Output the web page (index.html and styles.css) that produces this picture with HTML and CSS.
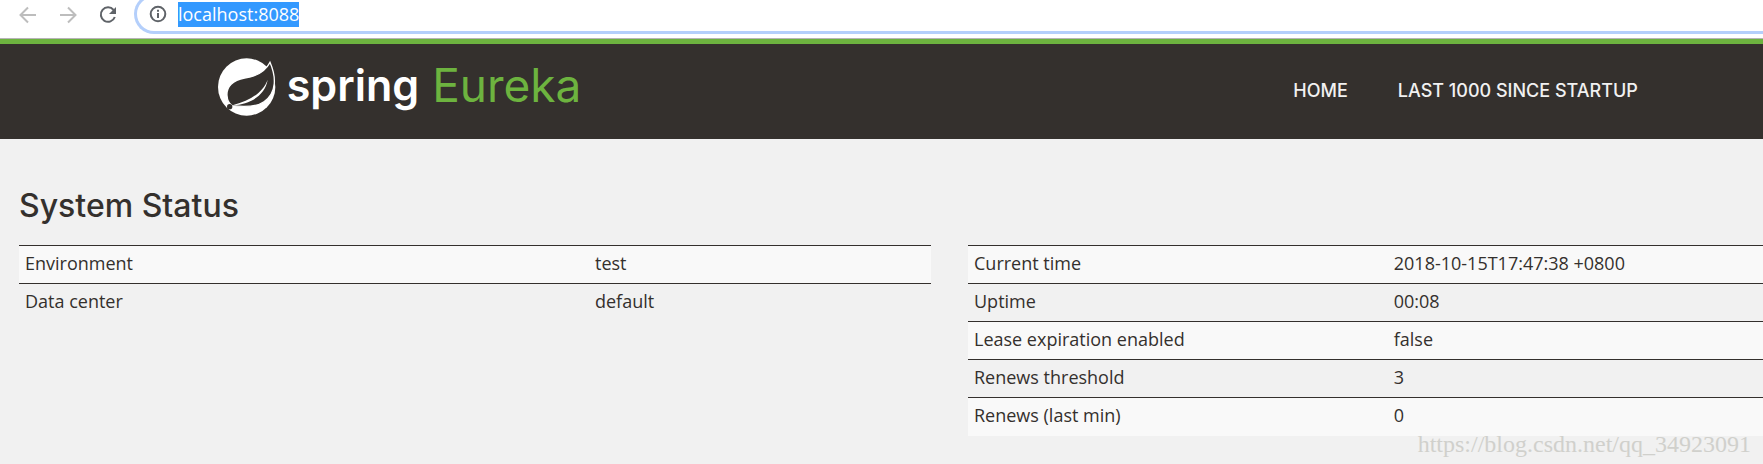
FILE: index.html
```
<!DOCTYPE html>
<html lang="en">
<head>
  <meta charset="UTF-8">
  <title>Eureka</title>
  <link rel="stylesheet" href="styles.css">
</head>
<body>

<div class="toolbar">
  <button class="tool-btn disabled" aria-label="Back">
    <svg width="18" height="18" viewBox="0 0 18 18"><path d="M17 9H2M9 1.5L1.5 9L9 16.5"/></svg>
  </button>
  <button class="tool-btn disabled" aria-label="Forward">
    <svg width="18" height="18" viewBox="0 0 18 18"><path d="M1 9h15M9 1.5L16.5 9L9 16.5"/></svg>
  </button>
  <button class="tool-btn" aria-label="Reload">
    <svg width="18" height="18" viewBox="0 0 18 18"><path d="M14.6 4A7.2 7.2 0 1 0 15.8 11"/><path class="solid" d="M17 1v7h-7z"/></svg>
  </button>
  <div class="omnibox">
    <svg class="info" width="18" height="18" viewBox="0 0 18 18"><circle cx="9" cy="9" r="7.3"/><path d="M9 8v5M9 4.8v2"/></svg>
    <input class="address" type="text" value="localhost:8088" aria-label="Address">
  </div>
</div>

<nav class="navbar">
  <a class="brand" href="#">
    <svg class="leaf" width="58" height="58" viewBox="52 55 174 174">
      <circle class="white" cx="138" cy="142" r="86"/>
      <path class="leaf-shape" d="M208 68C192 98 168 110 132 115C96 121 77 142 79 168C80 184 85 192 94 198C128 202 168 202 190 186C230 158 226 110 208 68Z"/>
      <path class="white" d="M201 120C186 160 146 184 98 196C142 196 193 170 201 120Z"/>
      <circle class="dot" cx="87" cy="201" r="8"/>
    </svg>
    <span class="brand-spring">spring</span>
    <span class="brand-name">Eureka</span>
  </a>
  <div class="nav-links">
    <a href="#">HOME</a>
    <a href="#">LAST 1000 SINCE STARTUP</a>
  </div>
</nav>

<main class="content">
  <h1>System Status</h1>
  <div class="status">
    <table class="table-env">
      <tr><td>Environment</td><td>test</td></tr>
      <tr><td>Data center</td><td>default</td></tr>
    </table>
    <table class="table-time">
      <tr><td>Current time</td><td>2018-10-15T17:47:38 +0800</td></tr>
      <tr><td>Uptime</td><td>00:08</td></tr>
      <tr><td>Lease expiration enabled</td><td>false</td></tr>
      <tr><td>Renews threshold</td><td>3</td></tr>
      <tr><td>Renews (last min)</td><td>0</td></tr>
    </table>
  </div>
</main>

<div class="watermark">https://blog.csdn.net/qq_34923091</div>

</body>
</html>
```
FILE: styles.css
```
* {
  box-sizing: border-box;
}

body {
  margin: 0;
  background: #f1f1f1;
  color: #34302d;
  font-family: "Open Sans", sans-serif;
  font-size: 18px;
}

/* Browser bar */
.toolbar {
  display: flex;
  align-items: flex-end;
  height: 39px;
  padding: 0 0 4px 19px;
  background: #fff;
  border-bottom: 1px solid #b6b4b6;
  overflow: hidden;
}

.tool-btn {
  display: flex;
  width: 18px;
  height: 18px;
  margin: 0 22px 10px 0;
  padding: 0;
  border: none;
  background: none;
}

.tool-btn svg, .info {
  fill: none;
  stroke: #5f6368;
  stroke-width: 2;
}

.tool-btn.disabled svg {
  stroke: #bdbdbd;
}

.tool-btn .solid {
  fill: #5f6368;
  stroke: none;
}

.omnibox {
  display: flex;
  flex: 1;
  align-items: center;
  gap: 11px;
  height: 40px;
  margin-left: -5px;
  padding-left: 12px;
  border: 3px solid #b4cffb;
  border-right: none;
  border-radius: 20px 0 0 20px;
}

.address {
  field-sizing: content;
  height: 25px;
  padding: 0;
  border: none;
  background: #3399ff;
  color: #fff;
  font-family: "Open Sans", sans-serif;
  font-size: 18px;
}

/* Header */
.navbar {
  display: flex;
  justify-content: space-between;
  height: 100px;
  padding: 0 7.1% 0 12.35%;
  background: #34302d;
  border-top: 5px solid #6db33f;
}

.brand {
  display: flex;
  align-items: center;
  height: 86px;
  text-decoration: none;
  font-family: Inter, sans-serif;
}

.leaf {
  margin-right: 11px;
}

.leaf .white {
  fill: #fff;
}

.leaf-shape {
  fill: #34302d;
  stroke: #fff;
  stroke-width: 4;
}

.leaf .dot {
  fill: #34302d;
}

.brand-spring {
  margin-right: 13px;
  padding-bottom: 4px;
  color: #fff;
  font-size: 43px;
  font-weight: 600;
}

.brand-name {
  padding-bottom: 4px;
  color: #6db33f;
  font-size: 46px;
}

.nav-links {
  display: flex;
  gap: 50px;
  align-items: center;
  padding-bottom: 2px;
}

.nav-links a {
  color: #f1f1f1;
  font-family: Inter, sans-serif;
  font-size: 18px;
  font-weight: 500;
  text-decoration: none;
}

/* Status tables */
.content {
  padding: 48px 0 0 19px;
}

h1 {
  margin: 0 0 20px;
  font-family: Inter, sans-serif;
  font-size: 32px;
  font-weight: 500;
  line-height: 38px;
}

.status {
  display: grid;
  grid-template-columns: 912fr 795fr;
  gap: 37px;
  align-items: start;
}

table {
  width: 100%;
  border-collapse: collapse;
  table-layout: fixed;
}

td {
  height: 38px;
  padding: 0 6px 4px;
  border-top: 1px solid #34302d;
  line-height: 24px;
}

tr:nth-child(odd) {
  background: #f9f9f9;
}

.table-env td:first-child {
  width: 62.5%;
}

.table-time td:first-child {
  width: 52.8%;
}

.watermark {
  position: absolute;
  right: 12px;
  bottom: 6px;
  color: #d0d0cc;
  font-family: "Liberation Serif", serif;
  font-size: 24px;
}
```
